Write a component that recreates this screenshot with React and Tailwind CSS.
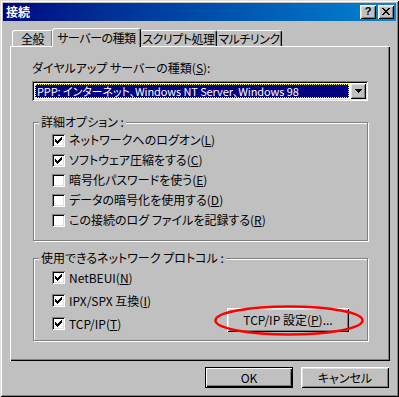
import React from "react";

const raised =
  "shadow-[inset_1px_1px_#fff,inset_-1px_-1px_#000,inset_2px_2px_#dfdfdf,inset_-2px_-2px_#808080]";

function CheckMark() {
  return (
    <svg width="7" height="7" viewBox="0 0 7 7" shapeRendering="crispEdges">
      <path
        fill="#000"
        d="M6 0h1v1h-1z M5 1h2v1h-2z M0 2h1v1h-1z M4 2h3v1h-3z M0 3h2v1h-2z M3 3h3v1h-3z M0 4h5v1h-5z M1 5h3v1h-3z M2 6h1v1h-1z"
      />
    </svg>
  );
}

function Checkbox({ checked, children }) {
  return (
    <div className="flex items-center gap-[4px]">
      <span className="w-[13px] h-[13px] bg-white shrink-0 flex items-center justify-center shadow-[inset_1px_1px_#808080,inset_-1px_-1px_#fff,inset_2px_2px_#000,inset_-2px_-2px_#dfdfdf]">
        {checked && <CheckMark />}
      </span>
      <span className="leading-[16px] whitespace-nowrap">{children}</span>
    </div>
  );
}

function Group({ label, className, children }) {
  return (
    <div
      className={
        "relative ml-[1px] border border-[#808080] shadow-[inset_1px_1px_#fff,1px_1px_#fff] " +
        className
      }
    >
      <span className="absolute left-[5px] -top-[9px] px-[2px] bg-[#c0c0c0] leading-[16px] whitespace-nowrap">
        {label}
      </span>
      {children}
    </div>
  );
}

const tabBase =
  "h-[16px] flex items-center justify-center whitespace-nowrap tracking-[-0.5px] border-t border-white rounded-tr-[3px] border-r border-r-black shadow-[inset_-1px_0_#808080] leading-[14px]";

export default function App() {
  return (
    <div className="w-[399px] h-[397px] bg-[#c0c0c0] p-[3px] flex flex-col text-black text-[12px] font-['Noto_Sans_CJK_JP','Noto_Sans',sans-serif] [font-feature-settings:'palt'] shadow-[inset_1px_1px_#dfdfdf,inset_-1px_-1px_#000,inset_2px_2px_#fff,inset_-2px_-2px_#808080]">
      {/* Title bar */}
      <div className="h-[18px] shrink-0 flex items-center bg-linear-to-r from-[#000080] to-[#1084d0] pl-[3px] pr-[2px]">
        <span className="text-white font-bold text-[12px] leading-none">接続</span>
        <div className="ml-auto flex gap-[2px]">
          <div className={"w-[16px] h-[14px] bg-[#c0c0c0] flex items-center justify-center " + raised}>
            <span className="text-[11px] font-bold leading-none font-['Liberation_Sans',sans-serif] -mt-[1px]">?</span>
          </div>
          <div className={"w-[16px] h-[14px] bg-[#c0c0c0] flex items-center justify-center " + raised}>
            <svg width="8" height="7" viewBox="0 0 8 7" shapeRendering="crispEdges" className="-mt-[1px]">
              <path
                fill="#000"
                d="M0 0h2v1h-2z M6 0h2v1h-2z M1 1h2v1h-2z M5 1h2v1h-2z M2 2h4v1h-4z M3 3h2v1h-2z M2 4h4v1h-4z M1 5h2v1h-2z M5 5h2v1h-2z M0 6h2v1h-2z M6 6h2v1h-2z"
              />
            </svg>
          </div>
        </div>
      </div>

      {/* Tabs */}
      <div className="mt-[7px] ml-[9px] h-[18px] flex items-end relative z-10">
        <div className={"w-[41px] border-l rounded-tl-[3px] " + tabBase}>全般</div>
        <div className="w-[89px] -ml-[1px] h-[19px] -mb-[1px] bg-[#c0c0c0] flex items-center justify-center whitespace-nowrap tracking-[-0.5px] border-t border-l border-white rounded-tl-[3px] rounded-tr-[3px] border-r border-r-black shadow-[inset_-1px_0_#808080] leading-[14px] pb-[1px]">
          サーバーの種類
        </div>
        <div className={"w-[76px] " + tabBase}>スクリプト処理</div>
        <div className={"w-[65px] " + tabBase}>マルチリンク</div>
      </div>

      {/* Panel */}
      <div className="ml-[7px] w-[380px] h-[315px] flex flex-col pt-[14px] pl-[22px] pr-[22px] shadow-[inset_1px_1px_#fff,inset_-1px_-1px_#000,inset_-2px_-2px_#808080]">
        <div className="leading-[16px] whitespace-nowrap">
          ダイヤルアップ サーバーの種類(<u>S</u>):
        </div>
        <div className="mt-[5px] h-[20px] bg-white flex p-[2px] shadow-[inset_1px_1px_#808080,inset_-1px_-1px_#fff,inset_2px_2px_#000,inset_-2px_-2px_#dfdfdf]">
          <div className="flex-1 m-[1px] mr-[1px] bg-[#000080] text-white text-[11px] tracking-[-0.1px] leading-[14px] pl-[2px] outline-1 outline-dotted outline-[#ffff00] -outline-offset-1 whitespace-nowrap">
            PPP: インターネット、Windows NT Server、Windows 98
          </div>
          <div className={"w-[16px] h-[16px] bg-[#c0c0c0] flex items-center justify-center " + raised}>
            <svg width="7" height="4" viewBox="0 0 7 4" shapeRendering="crispEdges">
              <path fill="#000" d="M0 0h7v1h-7z M1 1h5v1h-5z M2 2h3v1h-3z M3 3h1v1h-1z" />
            </svg>
          </div>
        </div>

        <Group label="詳細オプション :" className="mt-[21px] h-[119px] flex flex-col pt-[7px] pl-[18px]">
          {[
            [true, <>ネットワークへのログオン(<u>L</u>)</>],
            [true, <>ソフトウェア圧縮をする(<u>C</u>)</>],
            [false, <>暗号化パスワードを使う(<u>E</u>)</>],
            [false, <>データの暗号化を使用する(<u>D</u>)</>],
            [false, <>この接続のログ ファイルを記録する(<u>R</u>)</>],
          ].map(([c, t], i) => (
            <div key={i} className="h-[20px] flex items-center">
              <Checkbox checked={c}>{t}</Checkbox>
            </div>
          ))}
        </Group>

        <Group label="使用できるネットワーク プロトコル :" className="mt-[17px] h-[83px] flex flex-col pt-[7px] pl-[18px] pr-[18px]">
          <div className="h-[23px] flex items-center">
            <Checkbox checked>
              NetBEUI(<u>N</u>)
            </Checkbox>
          </div>
          <div className="h-[23px] flex items-center">
            <Checkbox checked>
              IPX/SPX 互換(<u>I</u>)
            </Checkbox>
          </div>
          <div className="h-[23px] flex items-start justify-between">
            <div className="h-[23px] flex items-center">
              <Checkbox checked>
                TCP/IP(<u>T</u>)
              </Checkbox>
            </div>
            <div className="relative -mt-[4px]">
              <div className={"w-[122px] h-[24px] bg-[#c0c0c0] flex items-center justify-center leading-[16px] " + raised}>
                TCP/IP 設定(<u>P</u>)...
              </div>
              <svg
                className="absolute -left-[13px] -top-[3px] pointer-events-none"
                width="150"
                height="31"
                viewBox="0 0 150 31"
              >
                <ellipse cx="75" cy="15.5" rx="73.5" ry="14" fill="none" stroke="#ff0000" strokeWidth="2.5" />
              </svg>
            </div>
          </div>
        </Group>
      </div>

      {/* Bottom buttons */}
      <div className="mt-[6px] flex justify-end gap-[8px] pr-[7px]">
        <div className="w-[88px] h-[21px] border border-black flex items-center justify-center leading-[16px] shadow-[inset_1px_1px_#fff,inset_-1px_-1px_#000,inset_-2px_-2px_#808080]">
          OK
        </div>
        <div className={"w-[88px] h-[21px] flex items-center justify-center leading-[16px] " + raised}>
          キャンセル
        </div>
      </div>
    </div>
  );
}
